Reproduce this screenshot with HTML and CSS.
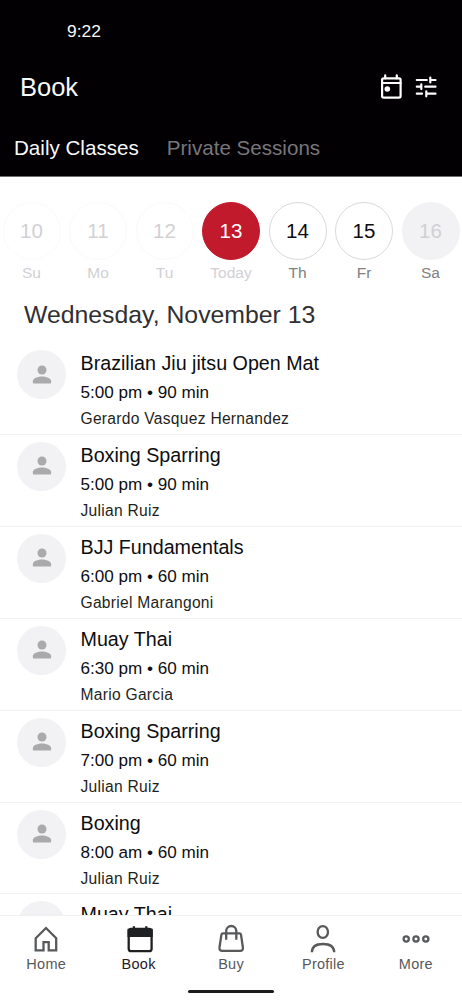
FILE: index.html
```html
<!DOCTYPE html>
<html lang="en">
<head>
  <meta charset="UTF-8">
  <meta name="viewport" content="width=device-width, initial-scale=1.0">
  <title>Book - Daily Classes</title>
  <link rel="stylesheet" href="styles.css">
</head>
<body>
  <svg class="sprite" aria-hidden="true">
    <symbol id="person" viewBox="0 0 24 24">
      <circle cx="12" cy="6.600" r="4.900"/>
      <path d="M2 21.200v-2.400c0-3.600 6-5.200 10-5.200s10 1.600 10 5.200v1.400q0 1-1 1H3q-1 0-1-1z"/>
    </symbol>
  </svg>

  <header class="header">
    <div class="status-bar">9:22</div>
    <div class="title-bar">
      <h1>Book</h1>
      <div class="actions">
        <svg class="icon-calendar" viewBox="0 0 24 26">
          <rect x="3.100" y="4.400" width="18.500" height="19.200" rx="1.500"/>
          <path d="M6.200 1.300v3M17.800 1.300v3M3 9h18.600"/>
          <circle class="dot" cx="8.300" cy="15" r="2.800"/>
        </svg>
        <svg class="icon-filter" viewBox="0 0 22 22">
          <path d="M1.800 4h10M15.300 4h5.200M15.300 1.600v4.800M1.800 10.700h4.500M10.200 10.700h10.300M6.300 8.300v4.800M1.800 17.700h5.200M11.300 17.700h9.200M11.300 15.300v5"/>
        </svg>
      </div>
    </div>
    <nav class="tabs">
      <a class="tab active">Daily Classes</a>
      <a class="tab">Private Sessions</a>
    </nav>
  </header>

  <main class="content">
    <div class="days">
      <div class="day past"><span class="date">10</span><span class="name">Su</span></div>
      <div class="day past"><span class="date">11</span><span class="name">Mo</span></div>
      <div class="day past"><span class="date">12</span><span class="name">Tu</span></div>
      <div class="day today"><span class="date">13</span><span class="name">Today</span></div>
      <div class="day"><span class="date">14</span><span class="name">Th</span></div>
      <div class="day"><span class="date">15</span><span class="name">Fr</span></div>
      <div class="day disabled"><span class="date">16</span><span class="name">Sa</span></div>
    </div>

    <h2>Wednesday, November 13</h2>

    <ul class="class-list">
      <li class="class-item">
        <div class="avatar"><svg><use href="#person"/></svg></div>
        <div class="info">
          <h3>Brazilian Jiu jitsu Open Mat</h3>
          <p class="time">5:00 pm • 90 min</p>
          <p class="coach">Gerardo Vasquez Hernandez</p>
        </div>
      </li>
      <li class="class-item">
        <div class="avatar"><svg><use href="#person"/></svg></div>
        <div class="info">
          <h3>Boxing Sparring</h3>
          <p class="time">5:00 pm • 90 min</p>
          <p class="coach">Julian Ruiz</p>
        </div>
      </li>
      <li class="class-item">
        <div class="avatar"><svg><use href="#person"/></svg></div>
        <div class="info">
          <h3>BJJ Fundamentals</h3>
          <p class="time">6:00 pm • 60 min</p>
          <p class="coach">Gabriel Marangoni</p>
        </div>
      </li>
      <li class="class-item">
        <div class="avatar"><svg><use href="#person"/></svg></div>
        <div class="info">
          <h3>Muay Thai</h3>
          <p class="time">6:30 pm • 60 min</p>
          <p class="coach">Mario Garcia</p>
        </div>
      </li>
      <li class="class-item">
        <div class="avatar"><svg><use href="#person"/></svg></div>
        <div class="info">
          <h3>Boxing Sparring</h3>
          <p class="time">7:00 pm • 60 min</p>
          <p class="coach">Julian Ruiz</p>
        </div>
      </li>
      <li class="class-item">
        <div class="avatar"><svg><use href="#person"/></svg></div>
        <div class="info">
          <h3>Boxing</h3>
          <p class="time">8:00 am • 60 min</p>
          <p class="coach">Julian Ruiz</p>
        </div>
      </li>
      <li class="class-item">
        <div class="avatar"><svg><use href="#person"/></svg></div>
        <div class="info">
          <h3>Muay Thai</h3>
        </div>
      </li>
    </ul>
  </main>

  <footer class="bottom-bar">
    <nav class="bottom-nav">
      <a class="nav-item">
        <svg viewBox="0 0 30 30"><path d="M4.700 14.200 15 4l10.200 10.200v12.100h-7.500v-8.200h-5.200v8.200H4.700z"/></svg>
        <span>Home</span>
      </a>
      <a class="nav-item active">
        <svg viewBox="0 0 30 30">
          <rect x="4.700" y="4.800" width="22.900" height="22.400" rx="2.500"/>
          <path class="band" d="M4.700 6h22.900v5.900H4.700z"/>
          <path d="M9.900 2.300v3M22.300 2.300v3"/>
        </svg>
        <span>Book</span>
      </a>
      <a class="nav-item">
        <svg viewBox="0 0 30 30">
          <path d="M7 9.400h16.500q1.300 0 1.500 1.300l1.900 12.800q.4 3.300-2.700 3.300H6.200q-3.100 0-2.700-3.300l1.900-12.800Q5.600 9.400 7 9.400z"/>
          <path d="M10.200 15.800V7a5.050 5 0 0 1 10.100 0v8.800"/>
        </svg>
        <span>Buy</span>
      </a>
      <a class="nav-item">
        <svg viewBox="0 0 30 30">
          <ellipse cx="14.800" cy="8" rx="5.200" ry="5.900"/>
          <path d="M3.800 28.300C4 22 8.800 20 15 20s11 2 11.300 8.300"/>
        </svg>
        <span>Profile</span>
      </a>
      <a class="nav-item">
        <svg viewBox="0 0 30 30">
          <circle cx="5.200" cy="15" r="2.600"/>
          <circle cx="15" cy="15" r="2.600"/>
          <circle cx="24.800" cy="15" r="2.600"/>
        </svg>
        <span>More</span>
      </a>
    </nav>
    <div class="home-indicator"></div>
  </footer>
</body>
</html>
```
FILE: styles.css
```css
:root {
  --accent: #c11a2c;
  --text: #0d0d0f;
  --muted: #58595b;
  --faded: #d2d0d4;
  --line: #f0f0f1;
}

* {
  box-sizing: border-box;
  margin: 0;
  padding: 0;
}

body {
  font-family: "Liberation Sans", Arial, sans-serif;
  background: #fff;
  color: var(--text);
  height: 1000px;
  display: flex;
  flex-direction: column;
  overflow: hidden;
}

h1, h2, h3 {
  font-weight: normal;
}

.sprite {
  display: none;
}

/* Header */
.header {
  background: #020003;
  color: #f8f8f8;
  height: 177px;
  flex-shrink: 0;
  border-bottom: 1px solid #6f6e70;
}

.status-bar {
  height: 62px;
  padding-left: 67px;
  font-size: 17.4px;
  line-height: 62px;
}

.title-bar {
  height: 50px;
  padding: 0 25px 0 20px;
  display: flex;
  align-items: center;
  justify-content: space-between;
}

.title-bar h1 {
  font-size: 25.5px;
}

.actions {
  display: flex;
  align-items: center;
  gap: 12px;
}

.actions svg {
  fill: none;
  stroke: #fff;
  stroke-width: 2.2;
  stroke-linecap: round;
}

.icon-calendar {
  width: 24px;
  height: 26px;
}

.actions .dot {
  fill: #fff;
  stroke: none;
}

.icon-filter {
  width: 22px;
  height: 22px;
}

.tabs {
  display: flex;
  gap: 28px;
  padding-left: 14px;
  font-size: 20.6px;
  line-height: 72px;
}

.tab {
  color: #77767a;
}

.tab.active {
  color: #f8f8f8;
}

/* Day picker */
.content {
  flex: 1;
  min-height: 0;
  overflow: hidden;
}

.days {
  display: flex;
  gap: 8.5px;
  padding: 24.6px 0 0 2.5px;
}

.day {
  width: 58px;
  flex-shrink: 0;
  text-align: center;
}

.date {
  display: block;
  height: 58px;
  border: 1px solid #d9d9db;
  border-radius: 50%;
  font-size: 20.5px;
  line-height: 56px;
}

.name {
  display: block;
  margin-top: 4.4px;
  font-size: 15.5px;
  line-height: 18px;
  color: #808083;
}

.past .date {
  border-color: #fafafa;
  color: var(--faded);
}

.past .name,
.today .name {
  color: var(--faded);
}

.today .date {
  background: var(--accent);
  border-color: var(--accent);
  color: #fff;
}

.disabled .date {
  background: #f2f1f4;
  border-color: #f2f1f4;
  color: #d0d0d2;
}

h2 {
  padding: 18px 0 0 24px;
  font-size: 24.8px;
  line-height: 30px;
  color: #303033;
}

/* Classes */
.class-list {
  list-style: none;
  padding-top: 13.1px;
}

.class-item {
  display: flex;
  height: 91.9px;
  padding: 6px 0 0 17px;
  border-bottom: 1px solid var(--line);
}

.avatar {
  width: 49px;
  height: 49px;
  margin: 1px 14.5px 0 0;
  border-radius: 50%;
  background: #f2f1f4;
  display: flex;
  align-items: center;
  justify-content: center;
}

.avatar svg {
  width: 22px;
  height: 22px;
  fill: #aaa9ac;
}

.info h3 {
  font-size: 19.7px;
  line-height: 28px;
}

.time {
  margin-top: 4px;
  font-size: 17.1px;
  line-height: 24px;
}

.coach {
  margin-top: 2px;
  font-size: 15.6px;
  line-height: 23px;
  letter-spacing: 0.28px;
  color: #1f1f22;
}

/* Bottom navigation */
.bottom-bar {
  height: 85px;
  flex-shrink: 0;
  background: #fff;
  border-top: 1px solid var(--line);
}

.bottom-nav {
  display: flex;
  height: 74px;
  padding-top: 8px;
}

.nav-item {
  flex: 1;
  display: flex;
  flex-direction: column;
  align-items: center;
  font-size: 14.5px;
  line-height: 20px;
  letter-spacing: 0.25px;
  color: var(--muted);
}

.nav-item svg {
  width: 30px;
  height: 30px;
  fill: none;
  stroke: var(--muted);
  stroke-width: 2.3;
}

.nav-item.active {
  color: #1f2022;
}

.nav-item.active svg {
  stroke: #1f2022;
}

.nav-item .band {
  fill: #1f2022;
}

.home-indicator {
  width: 86px;
  height: 3px;
  margin: 0 auto;
  border-radius: 2px;
  background: #1b1b1d;
}
```
